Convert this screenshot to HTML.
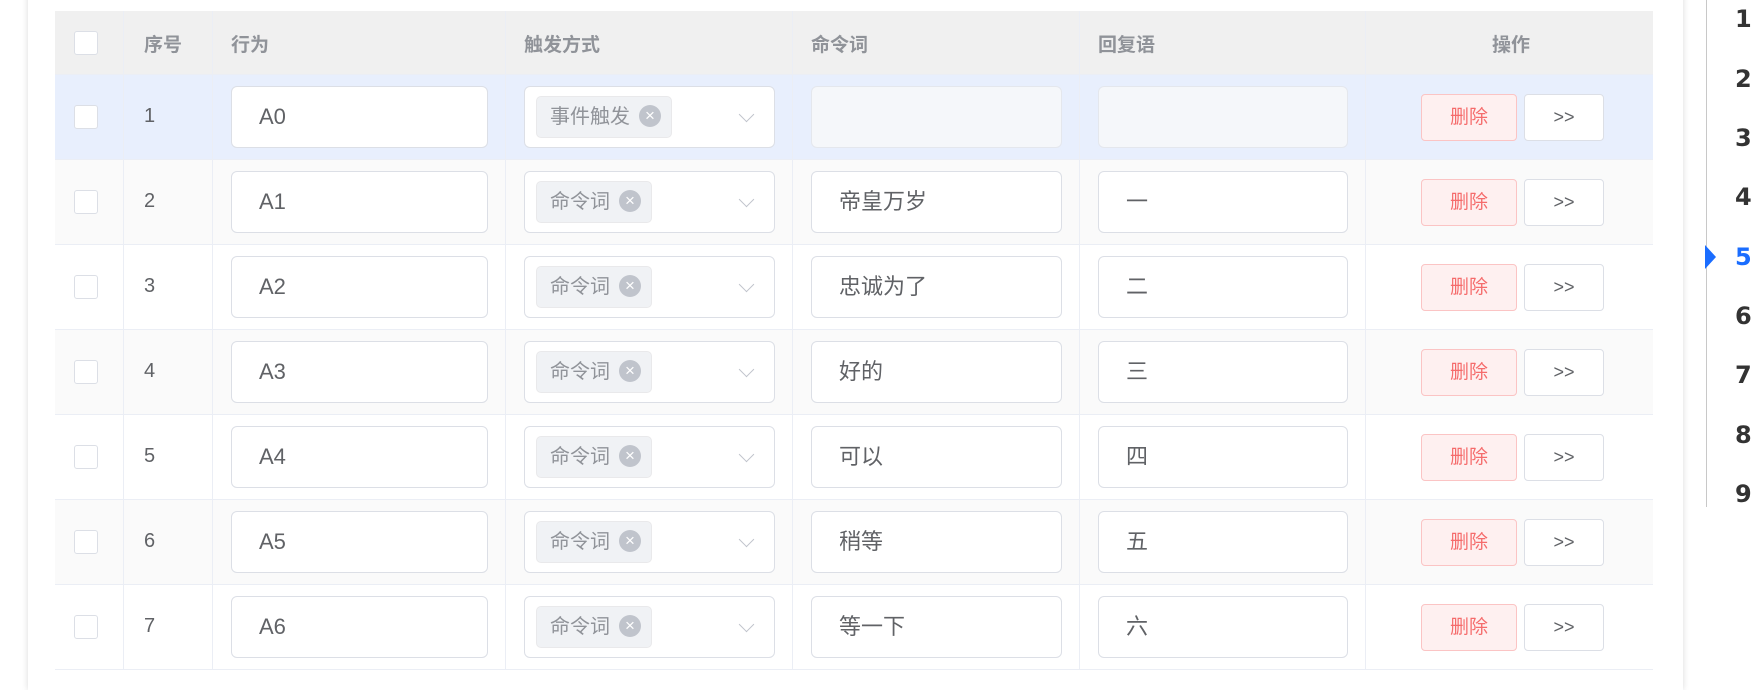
<!DOCTYPE html>
<html><head><meta charset="utf-8"><style>
*{box-sizing:border-box;margin:0;padding:0}
body{width:1758px;height:666px;overflow:hidden;background:#fff;font-family:"Liberation Sans","Noto Sans CJK SC",sans-serif;position:relative}
.card{position:absolute;left:28px;top:-10px;width:1655px;height:700px;background:#fff;box-shadow:0 0 6px rgba(0,0,0,.15)}
.tbl{position:absolute;left:55px;top:11px;width:1598px}
.row{position:absolute;left:0;width:1598px;height:85px;border-bottom:1px solid #ebeef5}
.hdr{top:0;height:64px;background:#f0f0f0;color:#909399;font-weight:bold;font-size:19px}
.c{position:absolute;top:0;height:100%;border-right:1px solid #ebeef5}
.cb{position:absolute;left:19px;width:24px;height:24px;border:1px solid #dcdfe6;border-radius:3px;background:#fff}
.inp{position:absolute;height:62px;border:1px solid #dcdfe6;border-radius:6px;background:#fff;font-size:22px;color:#606266;padding-left:27px;line-height:60px}
.dis{background:#f5f7fa;border-color:#e4e7ed}
.tag{position:absolute;left:11px;top:9px;height:42px;padding:0 10px 0 13px;background:#f0f2f5;border:1px solid #e9e9eb;border-radius:5px;font-size:20px;color:#909399;line-height:40px;white-space:nowrap}
.x{display:inline-block;width:22px;height:22px;border-radius:50%;background:#c0c4cc;color:#fff;font-size:17px;line-height:22px;text-align:center;vertical-align:middle;margin-left:9px;margin-top:-3px}
.chev{position:absolute;right:22px;top:22px;width:11px;height:11px;border-right:1.5px solid #c0c4cc;border-bottom:1.5px solid #c0c4cc;transform:rotate(45deg)}
.del{position:absolute;width:96px;height:47px;background:#fef0f0;border:1px solid #fbc4c4;border-radius:4px;color:#f56c6c;font-size:19px;text-align:center;line-height:45px}
.go{position:absolute;width:80px;height:47px;background:#fff;border:1px solid #dcdfe6;border-radius:4px;color:#606266;font-size:18px;text-align:center;line-height:45px}
.num{position:absolute;left:89px;font-size:20px;color:#606266}
.side{position:absolute;left:1706px;top:0;width:1px;height:507px;background:#c8c8c8}
.sn{position:absolute;left:1735px;font-size:24px;font-weight:bold;color:#333;font-family:"DejaVu Sans","Liberation Sans",sans-serif}
</style></head><body>
<div class="card"></div>
<div class="tbl">
<div class="row hdr">
 <div class="c" style="left:0;width:69px"></div><div class="c" style="left:69px;width:89px"></div><div class="c" style="left:158px;width:293px"></div><div class="c" style="left:451px;width:287px"></div><div class="c" style="left:738px;width:287px"></div><div class="c" style="left:1025px;width:286px"></div>
 <div class="cb" style="top:20px"></div>
 <div style="position:absolute;left:89px;top:19px">序号</div>
 <div style="position:absolute;left:176px;top:19px">行为</div>
 <div style="position:absolute;left:469px;top:19px">触发方式</div>
 <div style="position:absolute;left:756px;top:19px">命令词</div>
 <div style="position:absolute;left:1043px;top:19px">回复语</div>
 <div style="position:absolute;left:1437px;top:19px">操作</div>
</div>
</div>
<div class="tbl" id="rows"></div>
<div class="side"></div>
<svg style="position:absolute;left:1703px;top:245px" width="14" height="24"><polygon points="2,0 13,12 2,24" fill="#1a6dff"/></svg>
<div class="sn" style="top:5px">1</div><div class="sn" style="top:65px">2</div><div class="sn" style="top:124px">3</div><div class="sn" style="top:183px">4</div><div class="sn" style="top:243px;color:#1a6dff">5</div><div class="sn" style="top:302px">6</div><div class="sn" style="top:361px">7</div><div class="sn" style="top:421px">8</div><div class="sn" style="top:480px">9</div>
<script>
var d=[["A0","事件触发","",""],["A1","命令词","帝皇万岁","一"],["A2","命令词","忠诚为了","二"],["A3","命令词","好的","三"],["A4","命令词","可以","四"],["A5","命令词","稍等","五"],["A6","命令词","等一下","六"]];
var h="";
d.forEach(function(r,i){
 var bg=i==0?"#e8effd":(i%2==1?"#fafafa":"#fff");
 var t=64+i*85;
 var dis=i==0?" dis":"";
 h+='<div class="row" style="top:'+t+'px;background:'+bg+'">'+
 '<div class="c" style="left:0;width:69px"></div><div class="c" style="left:69px;width:89px"></div><div class="c" style="left:158px;width:293px"></div><div class="c" style="left:451px;width:287px"></div><div class="c" style="left:738px;width:287px"></div><div class="c" style="left:1025px;width:286px"></div>'+
 '<div class="cb" style="top:30px"></div>'+
 '<div class="num" style="top:30px">'+(i+1)+'</div>'+
 '<div class="inp" style="left:176px;top:11px;width:257px">'+r[0]+'</div>'+
 '<div class="inp" style="left:469px;top:11px;width:251px"><div class="tag">'+r[1]+'<span class="x">×</span></div><div class="chev"></div></div>'+
 '<div class="inp'+dis+'" style="left:756px;top:11px;width:251px">'+r[2]+'</div>'+
 '<div class="inp'+dis+'" style="left:1043px;top:11px;width:250px">'+r[3]+'</div>'+
 '<div class="del" style="left:1366px;top:19px">删除</div>'+
 '<div class="go" style="left:1469px;top:19px">&gt;&gt;</div>'+
 '</div>';
});
document.getElementById("rows").innerHTML=h;
</script>
</body></html>
